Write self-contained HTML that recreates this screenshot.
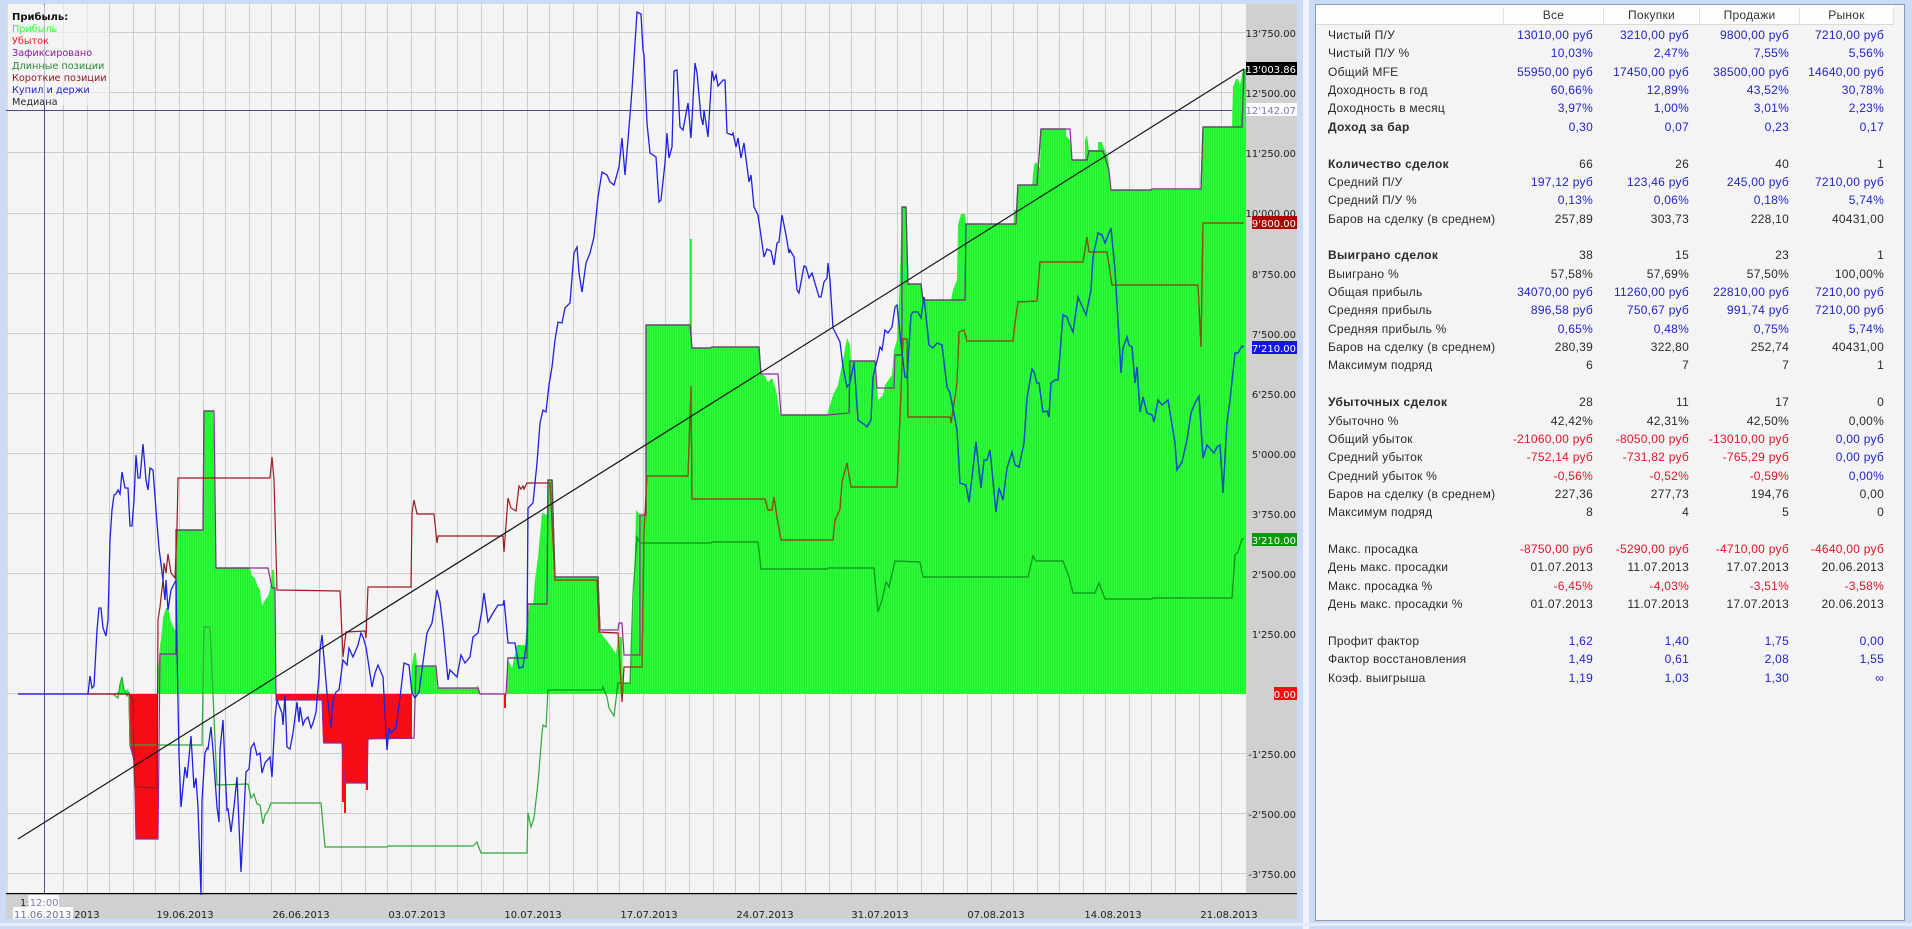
<!DOCTYPE html>
<html><head><meta charset="utf-8"><title>Прибыль</title>
<style>
html,body{margin:0;padding:0;width:1912px;height:929px;overflow:hidden;background:#cbdbf5}
#seam{position:absolute;left:1303px;top:0;width:6px;height:929px;background:#eef3fb}
#bot{position:absolute;left:0;top:923px;width:1912px;height:3px;background:#e4ecf9}
svg{position:absolute;left:0;top:0}
svg text{font-family:"DejaVu Sans",sans-serif;font-size:10px}
#p{position:absolute;left:1315px;top:4px;width:588px;height:915px;background:#f4f4f4;border:1px solid #8d9aa8;font:12px "Liberation Sans",sans-serif;letter-spacing:.25px;color:#2a2a2a}
#h{position:relative;height:20px;background:#fdfdfd;border-bottom:1px solid #d8d8d8;box-sizing:border-box;width:578px}
#h span{position:absolute;top:3px;text-align:center;color:#333;border-left:1px solid #e2e2e2;height:17px;box-sizing:border-box}
#t{padding-top:1px}
.r{height:18.37px;line-height:18.37px;display:grid;grid-template-columns:12px 143px 122px 96px 100px 95px;white-space:nowrap}
.r>:first-child{grid-column:2;overflow:visible}
.r span{text-align:right}
.r span:first-child{text-align:left}
.h{font-weight:bold;letter-spacing:.35px}
.r span.h~span{font-weight:normal}
.u span:not(:first-child),span.x{color:#2222cc}
.d span:not(:first-child){color:#e2142a}
.d span.x{color:#2222cc}
</style></head><body>
<div id="seam"></div><div id="bot"></div>
<svg width="1300" height="925" viewBox="0 0 1300 925">
<defs>
<pattern id="pg" width="2.32" height="4" patternUnits="userSpaceOnUse"><rect width="2.32" height="4" fill="#1cf02c"/><rect width=".9" height="4" fill="#3cfb44"/></pattern>
<pattern id="pr" width="2.32" height="4" patternUnits="userSpaceOnUse"><rect width="2.32" height="4" fill="#ff0a0a"/><rect width=".8" height="4" fill="#e8102c"/></pattern>
<clipPath id="c"><polygon points="507,694 507,658 512,668 517,645 525,645 527,620 530,603 533,605 535,580 538,557 542,513 547,515 548,480 553,480 555,577 598,577 600,632 610,645 616,654 618,637 622,637 623,683 630,683 632,640 634,590 636,510 640,515 646,515 646,325 690,325 690,239 692,239 692,348 711,348 711,347 759,347 761,374 765,376 768,382 772,378 776,390 780,415 827,415 833,395 838,385 843,360 847,338 850,345 851,361 875,361 878,400 883,395 885,385 892,375 894,350 897,340 899,300 900,270 902,207 906,207 908,284 921,284 923,300 951,300 953,290 957,280 958,225 961,214 965,214 966,224 1014,224 1014,210 1016,210 1017,185 1032,185 1034,165 1036,162 1038,165 1040,168 1041,129 1066,129 1066,136 1070,140 1072,160 1085,160 1085,140 1087,135 1089,150 1098,150 1098,142 1102,142 1104,148 1107,155 1108,156 1111,190 1201,190 1203,127 1232,127 1233,87 1236,79 1238,79 1240,85 1243,69 1246,69 1246,694"/></clipPath>
<polyline id="lb" fill="none" points="18,694 88,694 90,676 92,688 94,686 97,630 99,608 101,608 103,628 106,636 108,620 110,540 112,510 114,495 116,494 118,490 120,494 122,472 125,488 128,488 130,526 132,526 134,500 136,455 138,478 140,478 143,444 146,480 148,490 150,468 153,470 156,510 159,548 163,580 165,600 166,580 168,610 171,590 174,584 176,580 177,650 179,755 181,807 185,767 187,778 191,736 194,788 196,778 198,807 201,895 202,800 205,753 207,748 208,749 211,727 213,750 217,807 219,822 220,750 223,720 225,767 227,810 228,809 231,832 234,807 237,777 241,872 246,772 249,769 251,748 254,743 257,755 260,753 262,773 265,763 270,757 272,777 275,717 277,700 282,713 283,725 285,695 287,747 290,749 293,733 297,702 299,722 300,707 303,725 305,720 308,717 311,728 313,723 316,712 319,677 320,650 322,635 327,693 331,728 333,700 336,692 339,690 343,660 347,665 349,648 353,657 358,645 361,633 363,637 366,647 372,687 375,673 378,665 383,677 387,750 389,728 391,733 396,728 400,698 404,663 409,665 412,693 415,698 419,692 427,633 432,623 437,590 440,602 443,627 448,680 450,670 457,677 461,655 465,663 470,657 473,637 478,633 482,610 484,593 488,622 493,613 498,605 503,605 504,600 508,643 515,643 519,668 523,667 527,640 528,508 533,503 537,463 540,423 543,410 546,412 549,385 552,367 555,340 558,322 562,323 565,308 570,303 574,253 577,247 579,273 582,292 586,263 590,253 594,237 598,197 602,172 607,175 610,182 614,185 619,167 622,138 625,175 628,140 632,90 637,12 641,14 643,50 644,55 647,123 650,153 656,157 659,202 661,200 665,163 667,133 669,158 672,147 674,71 677,70 680,127 683,130 688,103 691,138 695,63 697,73 701,117 703,125 704,110 708,137 712,71 714,80 716,75 718,86 723,80 725,80 727,133 732,135 733,133 736,147 738,138 741,158 744,143 749,182 751,175 754,207 758,215 764,257 767,249 771,251 774,265 777,243 779,242 782,215 786,235 789,253 790,250 794,257 797,290 799,293 804,266 806,267 809,278 812,273 819,297 821,297 824,282 827,278 828,263 830,280 833,328 840,342 843,367 847,387 850,383 854,362 858,420 865,425 867,427 871,420 873,377 878,357 880,347 882,350 885,330 888,333 892,327 895,307 897,305 902,353 905,377 907,378 911,315 913,312 918,312 921,318 924,297 929,345 933,348 937,343 942,345 947,387 950,393 957,430 960,483 966,485 969,502 972,477 976,442 981,488 984,460 987,460 990,450 996,512 999,488 1003,500 1007,468 1012,452 1015,465 1019,467 1024,443 1027,398 1032,369 1034,372 1037,383 1039,383 1043,412 1047,411 1049,417 1051,383 1055,380 1058,380 1063,315 1067,317 1069,323 1073,332 1078,297 1086,315 1091,290 1093,257 1098,233 1102,235 1105,243 1111,228 1115,270 1121,373 1123,348 1127,337 1129,345 1132,347 1135,383 1137,367 1140,412 1143,397 1147,413 1152,415 1154,422 1158,400 1162,405 1168,400 1175,443 1177,470 1182,462 1187,440 1191,413 1195,403 1199,396 1203,458 1207,445 1214,453 1217,447 1220,445 1223,493 1227,422 1230,400 1235,353 1238,353 1242,346 1244,347"/>
<polyline id="ls" fill="none" points="88,694 129,694 133,700 134,763 135,787 157,788 158,620 160,607 163,580 164,563 166,573 168,554 171,573 175,578 177,527 178,478 270,478 272,457 274,480 277,590 340,591 343,657 346,632 365,631 366,638 368,587 411,587 412,513 414,500 417,514 434,514 437,543 438,536 503,536 504,552 508,498 511,508 516,511 519,486 521,489 523,486 524,489 527,483 550,483 555,580 597,580 599,632 618,633 622,702 624,667 642,667 644,533 647,476 688,476 691,386 692,499 765,499 768,510 772,510 774,497 777,517 781,540 833,540 835,520 840,509 842,482 847,463 851,487 897,487 900,417 903,339 907,339 908,417 950,417 951,423 957,383 959,332 964,330 967,341 1013,341 1015,323 1018,302 1037,301 1040,262 1083,262 1087,237 1089,252 1107,252 1112,285 1198,285 1201,347 1203,223 1244,223"/>
<polyline id="ll" fill="none" points="113,694 118,698 120,684 122,677 124,690 127,696 129,692 130,745 202,745 204,627 210,627 217,785 248,784 251,798 254,794 257,804 260,805 263,824 265,815 268,811 271,803 321,803 325,847 387,847 388,846 473,846 477,842 478,845 481,853 527,853 528,813 531,827 534,818 538,783 542,733 543,725 546,727 548,690 602,690 603,687 607,697 609,708 614,716 618,683 630,683 633,593 637,537 640,543 710,543 713,542 758,542 761,569 827,569 828,568 874,568 878,612 882,600 886,582 889,587 895,561 920,562 923,577 1028,577 1033,556 1036,561 1063,561 1069,577 1073,593 1095,593 1099,583 1105,599 1152,599 1153,598 1232,598 1235,555 1238,552 1242,539 1244,539"/>
</defs>
<rect x="6" y="4" width="1291" height="915" fill="#f4f4f4"/>
<rect x="6" y="4" width="2" height="889" fill="#dcdcdc"/>
<rect x="1246" y="4" width="51" height="915" fill="#d0d0d0"/>
<rect x="6" y="893" width="1291" height="26" fill="#d0d0d0"/>
<g stroke="#cdcdcd" stroke-width="1" fill="none">
<path d="M6 32.5H1246M6 92.5H1246M6 152.5H1246M6 213.5H1246M6 273.5H1246M6 333.5H1246M6 393.5H1246M6 453.5H1246M6 513.5H1246M6 573.5H1246M6 633.5H1246M6 693.5H1246M6 753.5H1246M6 813.5H1246M6 873.5H1246"/>
<path d="M63.5 4V893M87.5 4V893M109.5 4V893M133.5 4V893M155.5 4V893M179.5 4V893M203.5 4V893M225.5 4V893M249.5 4V893M271.5 4V893M295.5 4V893M319.5 4V893M341.5 4V893M365.5 4V893M387.5 4V893M411.5 4V893M435.5 4V893M457.5 4V893M481.5 4V893M503.5 4V893M527.5 4V893M549.5 4V893M573.5 4V893M597.5 4V893M619.5 4V893M643.5 4V893M665.5 4V893M689.5 4V893M713.5 4V893M735.5 4V893M759.5 4V893M781.5 4V893M805.5 4V893M829.5 4V893M851.5 4V893M875.5 4V893M897.5 4V893M921.5 4V893M943.5 4V893M967.5 4V893M991.5 4V893M1013.5 4V893M1037.5 4V893M1059.5 4V893M1083.5 4V893M1105.5 4V893M1129.5 4V893M1151.5 4V893M1175.5 4V893M1199.5 4V893M1221.5 4V893"/>
</g>
<path d="M6 110.5H1246M44.5 4V893" stroke="#4c4c98" stroke-width="1" fill="none"/>
<!-- profit fill -->
<g fill="url(#pg)">
<polygon points="113,694 118,692 119,690 121,680 122,676 123,680 124,690 127,690 128,688 129,694"/>
<polygon points="158,694 158,673 160,645 161,640 163,618 166,608 168,608 171,622 175,630 176,630 176,530 203,530 204,411 213,411 214,441 215,441 216,568 250,568 252,576 255,578 257,585 260,590 262,606 265,600 268,596 270,590 272,570 274,570 275,588 276,694"/>
<polygon points="411,694 412,665 414,653 416,653 417,666 436,666 437,688 476,688 478,685 480,694"/>
<polygon points="507,694 507,658 512,668 517,645 525,645 527,620 530,603 533,605 535,580 538,557 542,513 547,515 548,480 553,480 555,577 598,577 600,632 610,645 616,654 618,637 622,637 623,683 630,683 632,640 634,590 636,510 640,515 646,515 646,325 690,325 690,239 692,239 692,348 711,348 711,347 759,347 761,374 765,376 768,382 772,378 776,390 780,415 827,415 833,395 838,385 843,360 847,338 850,345 851,361 875,361 878,400 883,395 885,385 892,375 894,350 897,340 899,300 900,270 902,207 906,207 908,284 921,284 923,300 951,300 953,290 957,280 958,225 961,214 965,214 966,224 1014,224 1014,210 1016,210 1017,185 1032,185 1034,165 1036,162 1038,165 1040,168 1041,129 1066,129 1066,136 1070,140 1072,160 1085,160 1085,140 1087,135 1089,150 1098,150 1098,142 1102,142 1104,148 1107,155 1108,156 1111,190 1201,190 1203,127 1232,127 1233,87 1236,79 1238,79 1240,85 1243,69 1246,69 1246,694"/>
</g>
<g fill="url(#pr)">
<polygon points="129,694 130,745 134,760 135,790 136,839 158,839 158,694"/>
<polygon points="276,694 276,700 322,700 322,716 323,743 342,743 342,802 344,802 344,813 346,813 346,783 366,783 366,790 368,790 368,739 412,739 412,694"/>
<polygon points="504,694 504,708 506,708 506,694"/>
</g>
<!-- closed P/L -->
<polyline fill="none" stroke="#8f2a9c" stroke-width="1.2" points="18,694 129,694 130,745 134,760 135,790 136,839 158,839 160,654 176,654 176,530 203,530 204,411 214,411 216,568 268,568 272,588 275,588 276,700 322,700 324,743 342,743 345,783 367,783 368,739 414,738 416,666 436,666 438,688 478,688 480,694 506,694 508,658 527,658 528,604 547,604 548,480 552,480 555,577 598,577 600,630 618,630 619,623 622,623 624,655 640,655 640,515 646,515 646,325 690,325 692,348 710,348 712,347 759,347 761,374 778,374 781,415 827,415 849,413 850,361 875,361 877,388 894,388 895,355 902,355 902,207 906,207 908,284 921,284 923,300 965,300 966,224 1016,224 1018,185 1037,185 1041,129 1070,129 1072,160 1087,160 1089,151 1103,151 1109,170 1111,190 1151,190 1152,189 1201,189 1203,127 1242,127 1244,69"/>
<path fill="none" stroke="#5a4a66" stroke-width="1.2" d="M176,654V530H203L204,411H214M216,568H250M508,658H527M528,604H547L548,480H552L555,577H598L600,630M646,515V325H690L692,348H710L712,347H759L761,374M781,415H827M849,413L850,361H875M895,355H902V207H906L908,284H921L923,300H965L966,224H1016L1018,185H1037L1041,129H1066M1072,160H1087L1089,151H1103L1109,170M1111,190H1151L1152,189H1201L1203,127H1242L1244,69"/>
<use href="#ll" stroke="#2fa838" stroke-width="1.2"/>
<use href="#ls" stroke="#9a1c20" stroke-width="1.2"/>
<use href="#lb" stroke="#2020e0" stroke-width="1.3"/>
<g clip-path="url(#c)">
<use href="#ll" stroke="#0c9a14" stroke-width="1.2"/>
<use href="#ls" stroke="#8a5210" stroke-width="1.2"/>
<use href="#lb" stroke="#0a50c0" stroke-width="1.3"/>
</g>
<line x1="18" y1="839" x2="1244" y2="69" stroke="#151515" stroke-width="1.2"/>
<rect x="6" y="893" width="1291" height="1.2" fill="#000"/>
<!-- legend -->
<rect x="8" y="5" width="101" height="100" fill="#f4f4f4" fill-opacity=".65"/>
<g style="font-size:9.7px">
<text x="12" y="20" font-weight="bold" fill="#111" style="font-size:10px">Прибыль:</text>
<text x="12" y="32" fill="#33ff33" style="font-size:9.7px">Прибыль</text>
<text x="12" y="44" fill="#f01c24" style="font-size:9.7px">Убыток</text>
<text x="12" y="56" fill="#8a1a9a" style="font-size:9.7px">Зафиксировано</text>
<text x="12" y="69" fill="#2a8c36" style="font-size:9.7px">Длинные позиции</text>
<text x="12" y="81" fill="#8e1c22" style="font-size:9.7px">Короткие позиции</text>
<text x="12" y="93" fill="#2222d0" style="font-size:9.7px">Купил и держи</text>
<text x="12" y="105" fill="#2a2a2a" style="font-size:9.7px">Медиана</text>
</g>
<!-- y axis -->
<g text-anchor="end" fill="#222">
<text x="1296" y="37">13'750.00</text>
<text x="1296" y="97">12'500.00</text>
<text x="1296" y="157">11'250.00</text>
<text x="1296" y="217">10'000.00</text>
<text x="1296" y="278">8'750.00</text>
<text x="1296" y="338">7'500.00</text>
<text x="1296" y="398">6'250.00</text>
<text x="1296" y="458">5'000.00</text>
<text x="1296" y="518">3'750.00</text>
<text x="1296" y="578">2'500.00</text>
<text x="1296" y="638">1'250.00</text>
<text x="1296" y="818">-2'500.00</text>
<text x="1296" y="758">-1'250.00</text>
<text x="1296" y="878">-3'750.00</text>
</g>
<rect x="1246" y="62" width="51" height="13" fill="#000"/>
<rect x="1246" y="103" width="51" height="13" fill="#fbfbfd"/>
<rect x="1252" y="216" width="45" height="13" fill="#b00000"/>
<rect x="1252" y="341" width="45" height="13" fill="#1414f0"/>
<rect x="1252" y="533" width="45" height="13" fill="#0c980c"/>
<rect x="1274" y="687" width="23" height="13" fill="#f01010"/>
<g text-anchor="end">
<text x="1296" y="73" fill="#fff">13'003.86</text>
<text x="1296" y="114" fill="#8080b0">12'142.07</text>
<text x="1296" y="227" fill="#fff">9'800.00</text>
<text x="1296" y="352" fill="#fff">7'210.00</text>
<text x="1296" y="544" fill="#fff">3'210.00</text>
<text x="1296" y="698" fill="#fff">0.00</text>
</g>
<!-- x axis -->
<g text-anchor="middle" fill="#222">
<text x="71" y="918">12.06.2013</text>
<text x="185" y="918">19.06.2013</text>
<text x="301" y="918">26.06.2013</text>
<text x="417" y="918">03.07.2013</text>
<text x="533" y="918">10.07.2013</text>
<text x="649" y="918">17.07.2013</text>
<text x="765" y="918">24.07.2013</text>
<text x="880" y="918">31.07.2013</text>
<text x="996" y="918">07.08.2013</text>
<text x="1113" y="918">14.08.2013</text>
<text x="1229" y="918">21.08.2013</text>
</g>
<rect x="28" y="895" width="31" height="12" fill="#fafafa"/>
<rect x="13" y="907" width="60" height="12" fill="#fafafa"/>
<text x="20" y="906" fill="#222">1<tspan fill="#7f7fa8">:12:00</tspan></text>
<text x="14" y="918" fill="#7070a0">11.06.2013</text>
</svg>

<div id="p">
<div id="h">
<span style="left:187px;width:100px">Все</span>
<span style="left:287px;width:96px">Покупки</span>
<span style="left:383px;width:100px">Продажи</span>
<span style="left:483px;width:95px;border-right:1px solid #e2e2e2">Рынок</span>
</div>
<div id="t">
<div class="r u"><span>Чистый П/У</span><span>13010,00 руб</span><span>3210,00 руб</span><span>9800,00 руб</span><span>7210,00 руб</span></div>
<div class="r u"><span>Чистый П/У %</span><span>10,03%</span><span>2,47%</span><span>7,55%</span><span>5,56%</span></div>
<div class="r u"><span>Общий MFE</span><span>55950,00 руб</span><span>17450,00 руб</span><span>38500,00 руб</span><span>14640,00 руб</span></div>
<div class="r u"><span>Доходность в год</span><span>60,66%</span><span>12,89%</span><span>43,52%</span><span>30,78%</span></div>
<div class="r u"><span>Доходность в месяц</span><span>3,97%</span><span>1,00%</span><span>3,01%</span><span>2,23%</span></div>
<div class="r u"><span class="h">Доход за бар</span><span>0,30</span><span>0,07</span><span>0,23</span><span>0,17</span></div>
<div class="r"></div>
<div class="r"><span class="h">Количество сделок</span><span>66</span><span>26</span><span>40</span><span>1</span></div>
<div class="r u"><span>Средний П/У</span><span>197,12 руб</span><span>123,46 руб</span><span>245,00 руб</span><span>7210,00 руб</span></div>
<div class="r u"><span>Средний П/У %</span><span>0,13%</span><span>0,06%</span><span>0,18%</span><span>5,74%</span></div>
<div class="r"><span>Баров на сделку (в среднем)</span><span>257,89</span><span>303,73</span><span>228,10</span><span>40431,00</span></div>
<div class="r"></div>
<div class="r"><span class="h">Выиграно сделок</span><span>38</span><span>15</span><span>23</span><span>1</span></div>
<div class="r"><span>Выиграно %</span><span>57,58%</span><span>57,69%</span><span>57,50%</span><span>100,00%</span></div>
<div class="r u"><span>Общая прибыль</span><span>34070,00 руб</span><span>11260,00 руб</span><span>22810,00 руб</span><span>7210,00 руб</span></div>
<div class="r u"><span>Средняя прибыль</span><span>896,58 руб</span><span>750,67 руб</span><span>991,74 руб</span><span>7210,00 руб</span></div>
<div class="r u"><span>Средняя прибыль %</span><span>0,65%</span><span>0,48%</span><span>0,75%</span><span>5,74%</span></div>
<div class="r"><span>Баров на сделку (в среднем)</span><span>280,39</span><span>322,80</span><span>252,74</span><span>40431,00</span></div>
<div class="r"><span>Максимум подряд</span><span>6</span><span>7</span><span>7</span><span>1</span></div>
<div class="r"></div>
<div class="r"><span class="h">Убыточных сделок</span><span>28</span><span>11</span><span>17</span><span>0</span></div>
<div class="r"><span>Убыточно %</span><span>42,42%</span><span>42,31%</span><span>42,50%</span><span>0,00%</span></div>
<div class="r d"><span>Общий убыток</span><span>-21060,00 руб</span><span>-8050,00 руб</span><span>-13010,00 руб</span><span class="x">0,00 руб</span></div>
<div class="r d"><span>Средний убыток</span><span>-752,14 руб</span><span>-731,82 руб</span><span>-765,29 руб</span><span class="x">0,00 руб</span></div>
<div class="r d"><span>Средний убыток %</span><span>-0,56%</span><span>-0,52%</span><span>-0,59%</span><span class="x">0,00%</span></div>
<div class="r"><span>Баров на сделку (в среднем)</span><span>227,36</span><span>277,73</span><span>194,76</span><span>0,00</span></div>
<div class="r"><span>Максимум подряд</span><span>8</span><span>4</span><span>5</span><span>0</span></div>
<div class="r"></div>
<div class="r d"><span>Макс. просадка</span><span>-8750,00 руб</span><span>-5290,00 руб</span><span>-4710,00 руб</span><span>-4640,00 руб</span></div>
<div class="r"><span>День макс. просадки</span><span>01.07.2013</span><span>11.07.2013</span><span>17.07.2013</span><span>20.06.2013</span></div>
<div class="r d"><span>Макс. просадка %</span><span>-6,45%</span><span>-4,03%</span><span>-3,51%</span><span>-3,58%</span></div>
<div class="r"><span>День макс. просадки %</span><span>01.07.2013</span><span>11.07.2013</span><span>17.07.2013</span><span>20.06.2013</span></div>
<div class="r"></div>
<div class="r u"><span>Профит фактор</span><span>1,62</span><span>1,40</span><span>1,75</span><span>0,00</span></div>
<div class="r u"><span>Фактор восстановления</span><span>1,49</span><span>0,61</span><span>2,08</span><span>1,55</span></div>
<div class="r u"><span>Коэф. выигрыша</span><span>1,19</span><span>1,03</span><span>1,30</span><span>∞</span></div>
</div>
</div>
</body></html>
